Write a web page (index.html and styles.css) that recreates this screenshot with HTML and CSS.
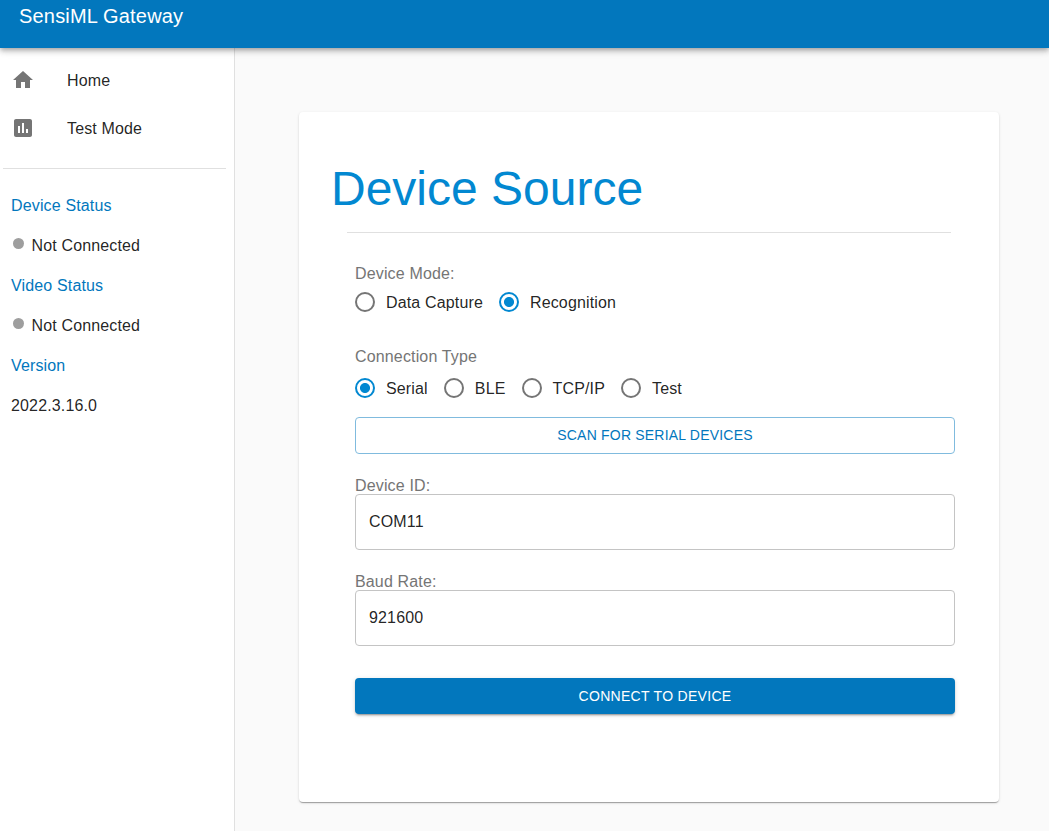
FILE: index.html
```html
<!DOCTYPE html>
<html lang="en">
<head>
<meta charset="utf-8">
<title>SensiML Gateway</title>
<link rel="stylesheet" href="styles.css">
</head>
<body>
<header class="app-bar">SensiML Gateway</header>
<div class="layout">
  <aside class="sidebar">
    <nav class="nav">
      <a class="nav-item"><svg class="icon" viewBox="0 0 24 24"><path d="M10 20v-6h4v6h5v-8h3L12 3 2 12h3v8z"/></svg><span class="nav-text">Home</span></a>
      <a class="nav-item"><svg class="icon" viewBox="0 0 24 24"><path d="M19 3H5c-1.1 0-2 .9-2 2v14c0 1.1.9 2 2 2h14c1.1 0 2-.9 2-2V5c0-1.1-.9-2-2-2zM9 17H7v-7h2v7zm4 0h-2V7h2v10zm4 0h-2v-4h2v4z"/></svg><span class="nav-text">Test Mode</span></a>
    </nav>
    <div class="status">
      <div class="status-title">Device Status</div>
      <div class="status-row"><i class="dot"></i>Not Connected</div>
      <div class="status-title">Video Status</div>
      <div class="status-row"><i class="dot"></i>Not Connected</div>
      <div class="status-title">Version</div>
      <div class="status-row">2022.3.16.0</div>
    </div>
  </aside>
  <main class="content">
    <section class="card">
      <h1 class="title">Device Source</h1>
      <div class="rule"></div>
      <form class="form">
        <div class="label">Device Mode:</div>
        <div class="radios mode">
          <label class="radio"><i class="ring"></i>Data Capture</label>
          <label class="radio"><i class="ring on"></i>Recognition</label>
        </div>
        <div class="label">Connection Type</div>
        <div class="radios type">
          <label class="radio"><i class="ring on"></i>Serial</label>
          <label class="radio"><i class="ring"></i>BLE</label>
          <label class="radio"><i class="ring"></i>TCP/IP</label>
          <label class="radio"><i class="ring"></i>Test</label>
        </div>
        <button type="button" class="btn outlined">SCAN FOR SERIAL DEVICES</button>
        <div class="label">Device ID:</div>
        <div class="field">COM11</div>
        <div class="label">Baud Rate:</div>
        <div class="field">921600</div>
        <button type="button" class="btn filled">CONNECT TO DEVICE</button>
      </form>
    </section>
  </main>
</div>
</body>
</html>
```
FILE: styles.css
```css
* { box-sizing: border-box; }
body {
  margin: 0;
  height: 831px;
  overflow: hidden;
  display: flex;
  flex-direction: column;
  background: #fafafa;
  color: rgba(0, 0, 0, .87);
  font: 16px/24px "Liberation Sans", Arial, sans-serif;
  letter-spacing: .15px;
}
.app-bar {
  position: relative;
  z-index: 1;
  flex: none;
  height: 48px;
  padding: 0 19px;
  background: #0277bd;
  color: #fff;
  font-size: 20px;
  line-height: 32px;
  letter-spacing: .18px;
  box-shadow: 0 2px 4px -1px rgba(0,0,0,.2), 0 4px 5px rgba(0,0,0,.14), 0 1px 10px rgba(0,0,0,.12);
}
.layout { display: flex; flex: 1; min-height: 0; }
.sidebar {
  flex: none;
  width: 235px;
  background: #fff;
  border-right: 1px solid #e0e0e0;
}
.nav {
  margin: 0 8px 0 3px;
  padding: 8px 0 16px;
  border-bottom: 1px solid #e0e0e0;
}
.nav-item { display: flex; align-items: center; height: 48px; padding-left: 8px; }
.nav-text { padding-top: 2px; }
.icon { width: 24px; height: 24px; margin-right: 32px; fill: #757575; }
.status { padding: 17px 11px; line-height: 40px; }
.status-title { color: #0277bd; }
.status-row { display: flex; align-items: center; }
.dot { width: 11px; height: 11px; margin: -5px 7.1px 0 2.4px; border-radius: 50%; background: #9e9e9e; }
.content { flex: 1; padding: 64px 50px 0 64px; }
.card {
  height: 690px;
  padding: 49px 44px 0 56px;
  border-radius: 4px;
  background: #fff;
  box-shadow: 0 2px 1px -1px rgba(0,0,0,.2), 0 1px 1px rgba(0,0,0,.14), 0 1px 3px rgba(0,0,0,.12);
}
.title { margin: 0 0 0 -24px; color: #0288d1; font-size: 48px; font-weight: 400; line-height: 56px; letter-spacing: 0; }
.rule { height: 1px; margin: 15px 4px 0 -8px; background: #e0e0e0; }
.form { display: flex; flex-direction: column; padding-top: 32px; }
.label { color: #757575; line-height: 18px; }
.radios { display: flex; gap: 16px; }
.radio { display: flex; align-items: flex-start; height: 24px; line-height: 26px; }
.ring {
  width: 20px;
  height: 20px;
  margin: 2px 11px 0 0;
  border: 2px solid #757575;
  border-radius: 50%;
}
.ring.on { border-color: #0288d1; background: radial-gradient(circle, #0288d1 4.6px, transparent 5.4px); }
.mode { margin: 7px 0 34px; }
.type { margin: 10px 0 17px; }
.btn {
  height: 37px;
  border: 1px solid #80bbde;
  border-radius: 4px;
  background: #fff;
  color: #0277bd;
  font: 14px/24px "Liberation Sans", Arial, sans-serif;
}
.outlined { margin-bottom: 23px; padding: 0 6px 2px; letter-spacing: .2px; }
.field {
  height: 56px;
  margin: -1px 0 23px;
  padding: 15px 13px;
  border: 1px solid #c4c4c4;
  border-radius: 4px;
}
.filled {
  height: 36px;
  margin-top: 9px;
  border: 0;
  background: #0277bd;
  color: #fff;
  letter-spacing: .3px;
  box-shadow: 0 3px 1px -2px rgba(0,0,0,.2), 0 2px 2px rgba(0,0,0,.14), 0 1px 5px rgba(0,0,0,.12);
}
```
